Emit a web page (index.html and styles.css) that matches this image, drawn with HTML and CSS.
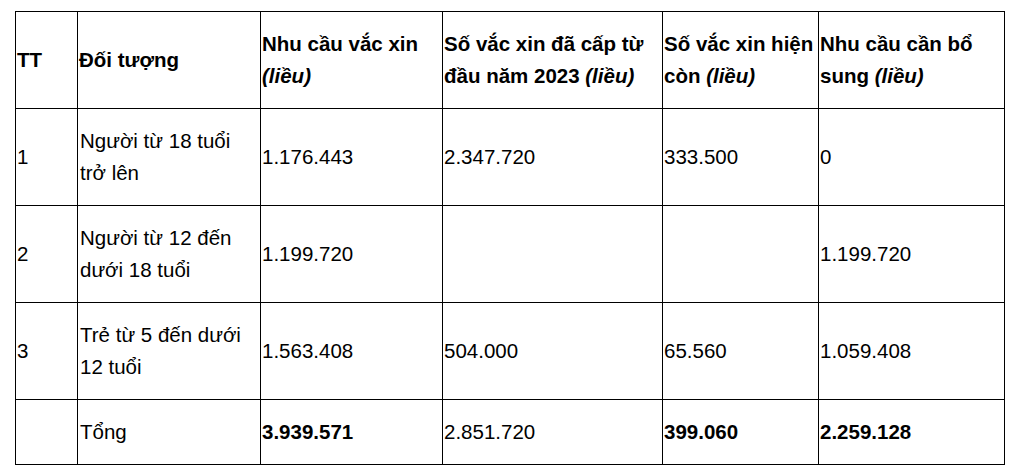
FILE: index.html
```html
<!DOCTYPE html>
<html lang="vi">
<head>
<meta charset="utf-8">
<link rel="stylesheet" href="styles.css">
</head>
<body>
<table class="vax">
  <colgroup>
    <col class="c-tt"><col class="c-obj"><col class="c-need"><col class="c-given"><col class="c-left"><col class="c-add">
  </colgroup>
  <thead>
    <tr>
      <th>TT</th>
      <th>Đối tượng</th>
      <th>Nhu cầu vắc xin <em>(liều)</em></th>
      <th>Số vắc xin đã cấp từ đầu năm 2023 <em>(liều)</em></th>
      <th>Số vắc xin hiện còn <em>(liều)</em></th>
      <th>Nhu cầu cần bổ sung <em>(liều)</em></th>
    </tr>
  </thead>
  <tbody>
    <tr>
      <td>1</td>
      <td class="obj">Người từ 18 tuổi trở lên</td>
      <td>1.176.443</td>
      <td>2.347.720</td>
      <td>333.500</td>
      <td>0</td>
    </tr>
    <tr>
      <td>2</td>
      <td class="obj">Người từ 12 đến dưới 18 tuổi</td>
      <td>1.199.720</td>
      <td></td>
      <td></td>
      <td>1.199.720</td>
    </tr>
    <tr>
      <td>3</td>
      <td class="obj">Trẻ từ 5 đến dưới 12 tuổi</td>
      <td>1.563.408</td>
      <td>504.000</td>
      <td>65.560</td>
      <td>1.059.408</td>
    </tr>
    <tr class="total">
      <td></td>
      <td class="obj">Tổng</td>
      <td><strong>3.939.571</strong></td>
      <td>2.851.720</td>
      <td><strong>399.060</strong></td>
      <td><strong>2.259.128</strong></td>
    </tr>
  </tbody>
</table>
</body>
</html>
```
FILE: styles.css
```css
html, body {
  margin: 0;
  padding: 0;
  background: #fff;
}
body {
  padding: 11px 0 0 15px;
  font-family: "Liberation Sans", Arial, sans-serif;
  font-size: 20.5px;
  color: #000;
}
.vax {
  border-collapse: collapse;
  table-layout: fixed;
  width: 989px;
}
.c-tt { width: 62px; }
.c-obj { width: 183px; }
.c-need { width: 182px; }
.c-given { width: 220px; }
.c-left { width: 156px; }
.c-add { width: 186px; }
.vax th, .vax td {
  border: 1px solid #000;
  padding: 16px 1px 16px 1px;
  line-height: 32px;
  text-align: left;
  vertical-align: middle;
  word-wrap: break-word;
}
.vax td.obj {
  padding-left: 2px;
  padding-right: 14px;
}
.vax th {
  font-weight: bold;
}
.vax th em {
  font-style: italic;
}
.vax strong {
  font-weight: bold;
}
```
